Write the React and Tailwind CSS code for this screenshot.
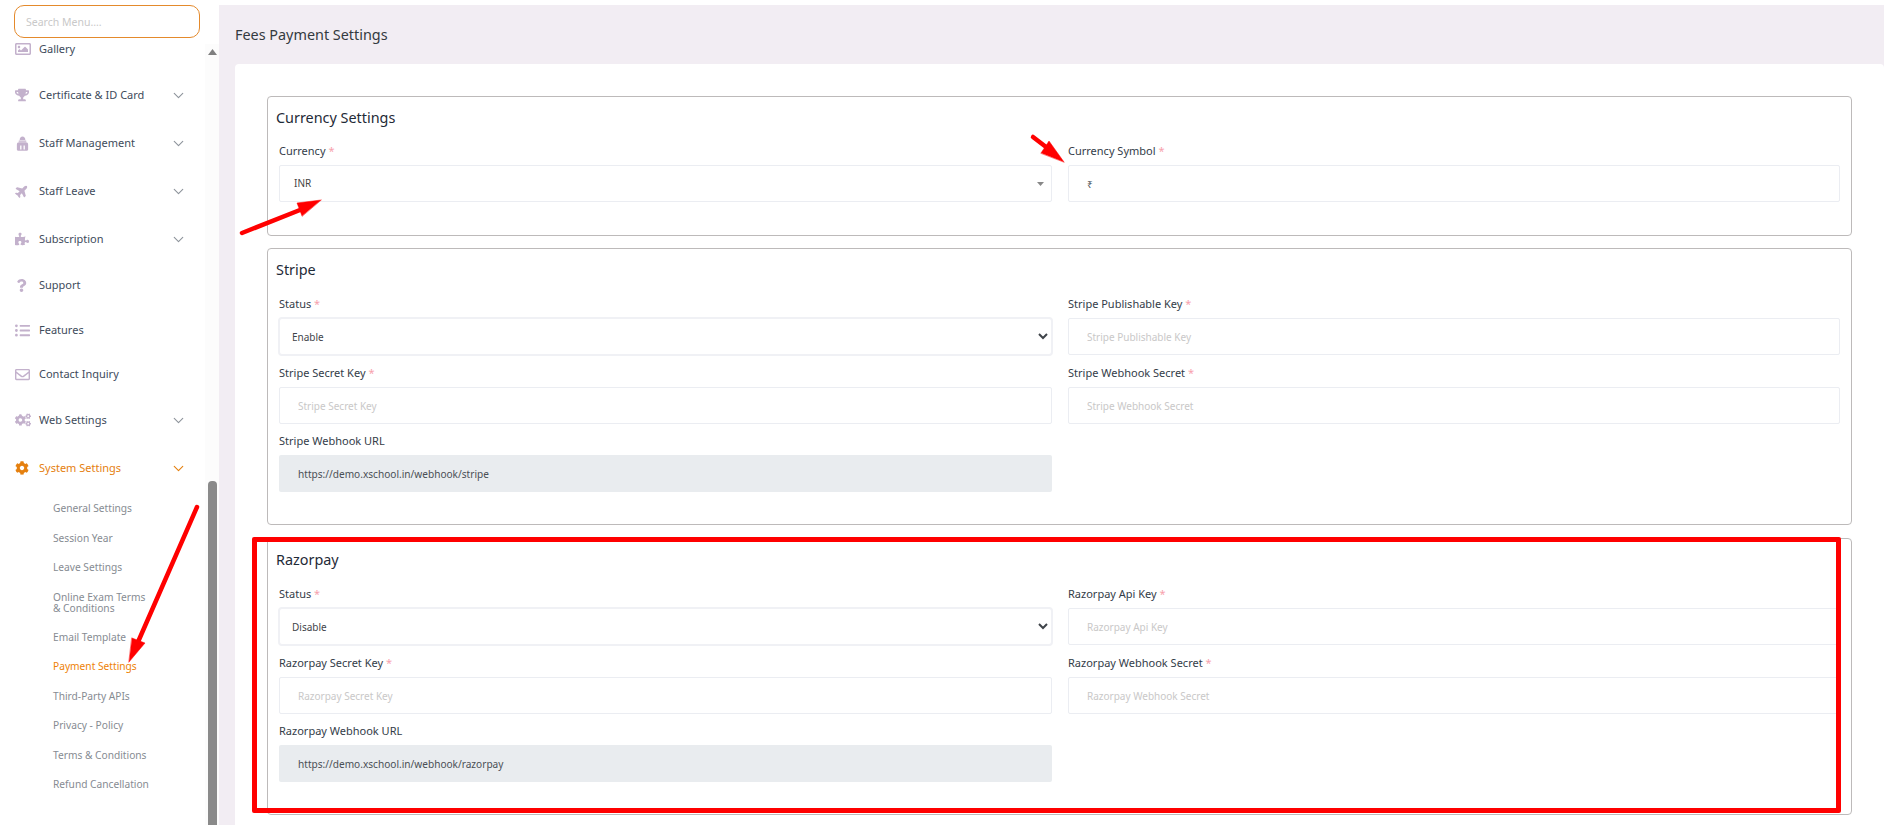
import React from "react";
import { FaRegImage, FaTrophy, FaPlane, FaPuzzlePiece, FaQuestion, FaListUl, FaRegEnvelope, FaCogs, FaCog } from "react-icons/fa";
import { FiChevronDown } from "react-icons/fi";

function StaffIcon({ size }) {
  return (
    <svg width={size} height={size} viewBox="0 0 14 16" fill="currentColor">
      <path d="M4 4.200C4 1.800 5.200.4 7 .4s3 1.400 3 3.800z" />
      <rect x="2.800" y="4.700" width="8.400" height="1.300" rx=".5" />
      <path fillRule="evenodd" d="M1 9c0-1.500 1-2.400 2.300-2.400h7.400C12 6.600 13 7.500 13 9v5.500c0 .7-.5 1.200-1.200 1.200H2.200c-.7 0-1.200-.5-1.200-1.200zM4.500 10v4.300h1.400V10zm3.600 0v4.300h1.400V10z" />
    </svg>
  );
}

function TiltedPlane({ size }) {
  return <FaPlane size={size} className="-rotate-45" />;
}

const menu = [
  { label: "Gallery", Icon: FaRegImage, h: "h-[44px]", size: 16 },
  { label: "Certificate & ID Card", Icon: FaTrophy, h: "h-[48px]", chev: true, size: 14 },
  { label: "Staff Management", Icon: StaffIcon, h: "h-[48px]", chev: true, size: 15 },
  { label: "Staff Leave", Icon: TiltedPlane, h: "h-[48px]", chev: true, size: 14 },
  { label: "Subscription", Icon: FaPuzzlePiece, h: "h-[48px]", chev: true, size: 14 },
  { label: "Support", Icon: FaQuestion, h: "h-[45px]", size: 13 },
  { label: "Features", Icon: FaListUl, h: "h-[44px]", size: 15 },
  { label: "Contact Inquiry", Icon: FaRegEnvelope, h: "h-[44px]", size: 15 },
  { label: "Web Settings", Icon: FaCogs, h: "h-[48px]", chev: true, size: 16 },
  { label: "System Settings", Icon: FaCog, h: "h-[48px]", chev: true, size: 14, active: true },
];

const subs = [
  { label: "General Settings" },
  { label: "Session Year" },
  { label: "Leave Settings" },
  { label: "Online Exam Terms", second: "& Conditions" },
  { label: "Email Template" },
  { label: "Payment Settings", active: true },
  { label: "Third-Party APIs" },
  { label: "Privacy - Policy" },
  { label: "Terms & Conditions" },
  { label: "Refund Cancellation" },
];

function MenuRow({ item }) {
  const { label, Icon, h, chev, size, active } = item;
  return (
    <div className={`${h} flex items-center pl-[15px] pr-[18px] text-[11px] ${active ? "text-[#e5800f]" : "text-[#3e4b5b]"}`}>
      <span className={`w-[24px] shrink-0 flex items-center ${active ? "text-[#e5800f]" : "text-[#c3b1cc]"}`}>
        <Icon size={size} />
      </span>
      <span className="flex-1 whitespace-nowrap">{label}</span>
      {chev && <FiChevronDown size={17} strokeWidth={1.6} className={active ? "text-[#e5800f]" : "text-[#8e949c]"} />}
    </div>
  );
}

function Sidebar() {
  return (
    <aside className="w-[219px] shrink-0 h-full flex bg-white">
      <div className="w-[205px] shrink-0 flex flex-col">
        <div className="relative z-10 pt-[5px] pl-[14px] pr-[5px]">
          <input
            placeholder="Search Menu...."
            className="w-[186px] h-[33px] rounded-[10px] border border-[#e48a2c] bg-white px-[11px] text-[10.5px] outline-none placeholder:text-[#c9c9c9]"
          />
        </div>
        <nav className="mt-[-11px]">
          {menu.map((m) => (
            <MenuRow key={m.label} item={m} />
          ))}
          <ul className="pt-[2px] pl-[53px]">
            {subs.map((s) => (
              <li
                key={s.label}
                className={`flex flex-col justify-center text-[10.2px] leading-[11px] whitespace-nowrap ${s.second ? "h-[40px]" : "h-[29.5px]"} ${s.active ? "text-[#ee8205]" : "text-[#868b92]"}`}
              >
                <span>{s.label}</span>
                {s.second && <span>{s.second}</span>}
              </li>
            ))}
          </ul>
        </nav>
      </div>
      <div className="w-[14px] shrink-0 mt-[44px] bg-[#fcfcfc] flex flex-col items-center">
        <svg width="9" height="6" viewBox="0 0 9 6" className="mt-[5px]">
          <path d="M4.500 0 9 6H0z" fill="#808080" />
        </svg>
        <div className="w-[9px] flex-1 mt-[426px] rounded-t-[4px] bg-[#8a8a8a]" />
      </div>
    </aside>
  );
}

function Req() {
  return <span className="text-[#f7a1ac]"> *</span>;
}

function Label({ text, req }) {
  return (
    <label className="block h-[20px] leading-[20px] text-[11px] text-[#333c48] whitespace-nowrap">
      {text}
      {req && <Req />}
    </label>
  );
}

const ctrl = "mt-[4px] block w-full h-[37px] border border-[#ebedf2] rounded-[2px] bg-white pl-[18px] text-[10px] text-[#4a4f55] outline-none placeholder:text-[#c9c8c8]";

function Input({ label, req, placeholder, value }) {
  return (
    <div>
      <Label text={label} req={req} />
      <input className={ctrl} placeholder={placeholder} defaultValue={value} />
    </div>
  );
}

function ReadOnly({ label, value }) {
  return (
    <div>
      <Label text={label} />
      <input
        readOnly
        value={value}
        className="mt-[4px] block w-full h-[37px] rounded-[2px] bg-[#e9ecef] pl-[19px] text-[10.1px] text-[#4a4f55] outline-none"
      />
    </div>
  );
}

function NativeSelect({ label, value, other }) {
  return (
    <div>
      <Label text={label} req />
      <select
        defaultValue={value}
        className="mt-[3px] ml-[-1px] block w-[calc(100%+2px)] h-[39px] border-2 border-[#f0f1f5] rounded-[4px] bg-white pl-[8px] text-[10px] text-[#3f444a] outline-none"
      >
        <option>{value}</option>
        <option>{other}</option>
      </select>
    </div>
  );
}

function Fieldset({ title, className, titleGap, children }) {
  return (
    <section className={`border border-[#bdbaba] rounded-[4px] pt-[11px] px-[11px] ${className}`}>
      <h4 className={`h-[20px] leading-[20px] text-[14.400px] text-[#1f2a37] -ml-[3px] ${titleGap}`}>{title}</h4>
      {children}
    </section>
  );
}

function GatewayFields({ name, status, other, keyLabel, url }) {
  return (
    <div className="grid grid-cols-[773px_772px] gap-x-[16px] gap-y-[7px]">
      <NativeSelect label="Status" value={status} other={other} />
      <Input label={keyLabel} req placeholder={keyLabel} />
      <Input label={`${name} Secret Key`} req placeholder={`${name} Secret Key`} />
      <Input label={`${name} Webhook Secret`} req placeholder={`${name} Webhook Secret`} />
      <ReadOnly label={`${name} Webhook URL`} value={url} />
    </div>
  );
}

function Annotations() {
  return (
    <>
      <div className="absolute left-[252px] top-[537px] w-[1589px] h-[276px] border-[5px] border-[#ff0000] rounded-[2px] pointer-events-none z-20" />
      <svg className="absolute left-0 top-0 z-30 pointer-events-none" width="1884" height="825" viewBox="0 0 1884 825">
        <g fill="#ff0000" stroke="#ff0000" strokeLinecap="round">
          <line x1="242" y1="233" x2="305" y2="208" strokeWidth="4.500" />
          <path d="M321 200 297 203 302 216Z" strokeWidth="0.500" />
          <line x1="1033" y1="137" x2="1050" y2="150" strokeWidth="4.500" />
          <path d="M1064 162 1049 141 1041 153Z" strokeWidth="0.500" />
          <line x1="197" y1="507" x2="138" y2="642" strokeWidth="4.500" />
          <path d="M129 662 145 643 132 638Z" strokeWidth="0.500" />
        </g>
      </svg>
    </>
  );
}

export default function App() {
  return (
    <div className="relative w-full h-[825px] overflow-hidden flex bg-white" style={{ fontFamily: '"Noto Sans", sans-serif' }}>
      <Sidebar />
      <main className="flex-1 min-w-0 mt-[5px] bg-[#f2edf3] pl-[16px] flex flex-col">
        <h3 className="h-[59px] shrink-0 flex items-center text-[14.400px] text-[#343a40]">Fees Payment Settings</h3>
        <div className="flex-1 bg-white rounded-t-[4px] pt-[32px] px-[32px]">
          <Fieldset title="Currency Settings" className="h-[140px] mb-[12px]" titleGap="mb-[13px]">
            <div className="grid grid-cols-[773px_772px] gap-x-[16px]">
              <div>
                <Label text="Currency" req />
                <div className="mt-[4px] h-[37px] border border-[#ebedf2] rounded-[2px] bg-white pl-[14px] pr-[7px] flex items-center justify-between text-[10px] text-[#444]">
                  <span>INR</span>
                  <svg width="7" height="4" viewBox="0 0 7 4">
                    <path d="M0 0h7L3.500 4z" fill="#888" />
                  </svg>
                </div>
              </div>
              <Input label="Currency Symbol" req value="₹" />
            </div>
          </Fieldset>
          <Fieldset title="Stripe" className="h-[277px] mb-[13px]" titleGap="mb-[14px]">
            <GatewayFields name="Stripe" status="Enable" other="Disable" keyLabel="Stripe Publishable Key" url="https://demo.xschool.in/webhook/stripe" />
          </Fieldset>
          <Fieldset title="Razorpay" className="h-[277px]" titleGap="mb-[14px]">
            <GatewayFields name="Razorpay" status="Disable" other="Enable" keyLabel="Razorpay Api Key" url="https://demo.xschool.in/webhook/razorpay" />
          </Fieldset>
        </div>
      </main>
      <Annotations />
    </div>
  );
}
